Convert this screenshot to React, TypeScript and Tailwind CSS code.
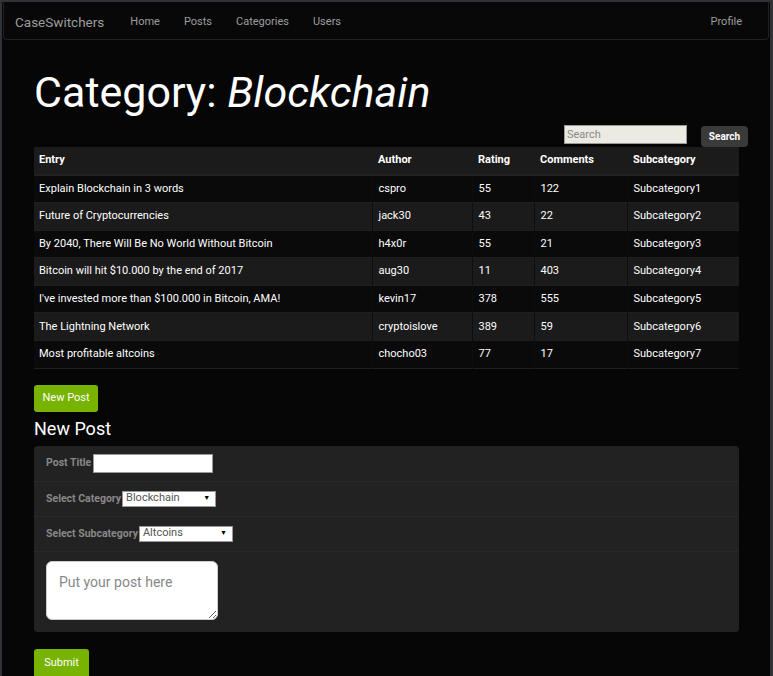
import React from "react";

type Row = {
  entry: string;
  author: string;
  rating: number;
  comments: number;
  sub: string;
};

const rows: Row[] = [
  { entry: "Explain Blockchain in 3 words", author: "cspro", rating: 55, comments: 122, sub: "Subcategory1" },
  { entry: "Future of Cryptocurrencies", author: "jack30", rating: 43, comments: 22, sub: "Subcategory2" },
  { entry: "By 2040, There Will Be No World Without Bitcoin", author: "h4x0r", rating: 55, comments: 21, sub: "Subcategory3" },
  { entry: "Bitcoin will hit $10.000 by the end of 2017", author: "aug30", rating: 11, comments: 403, sub: "Subcategory4" },
  { entry: "I've invested more than $100.000 in Bitcoin, AMA!", author: "kevin17", rating: 378, comments: 555, sub: "Subcategory5" },
  { entry: "The Lightning Network", author: "cryptoislove", rating: 389, comments: 59, sub: "Subcategory6" },
  { entry: "Most profitable altcoins", author: "chocho03", rating: 77, comments: 17, sub: "Subcategory7" },
];

function Navbar() {
  return (
    <nav className="mx-px flex h-[38px] items-center rounded-b border border-t-0 border-[#222] bg-[#080808] pt-[3px] text-[11px] text-[#9d9d9d]">
      <span className="ml-[11px] text-[13.5px]">CaseSwitchers</span>
      <a className="ml-[26px]">Home</a>
      <a className="ml-[24px]">Posts</a>
      <a className="ml-[24px]">Categories</a>
      <a className="ml-[24px]">Users</a>
      <a className="ml-auto mr-[26px]">Profile</a>
    </nav>
  );
}

function PostsTable() {
  return (
    <table className="w-[705px] table-fixed border-collapse text-[11px] text-white">
      <colgroup>
        <col className="w-[338px]" />
        <col className="w-[100px]" />
        <col className="w-[62px]" />
        <col className="w-[93px]" />
        <col className="w-[112px]" />
      </colgroup>
      <thead>
        <tr className="h-[28px] border-b-2 border-[#222] bg-[#1b1b1b] text-left font-bold">
          <th className="pl-[5px]">Entry</th>
          <th className="pl-[6px]">Author</th>
          <th className="pl-[6px]">Rating</th>
          <th className="pl-[6px]">Comments</th>
          <th className="pl-[6px]">Subcategory</th>
        </tr>
      </thead>
      <tbody>
        {rows.map((r, i) => (
          <tr
            key={r.entry}
            className={
              i % 2 === 0
                ? "h-[27.6px] border-b border-[#1f1f1f] bg-[#0a0a0a]"
                : "h-[27.6px] border-b border-[#1f1f1f] bg-[#1b1b1b]"
            }
          >
            <td className="border-r border-[#0e0e0e] pl-[5px]">{r.entry}</td>
            <td className="border-r border-[#0e0e0e] pl-[6px]">{r.author}</td>
            <td className="border-r border-[#0e0e0e] pl-[6px]">{r.rating}</td>
            <td className="border-r border-[#0e0e0e] pl-[6px]">{r.comments}</td>
            <td className="pl-[6px]">{r.sub}</td>
          </tr>
        ))}
      </tbody>
    </table>
  );
}

function FakeSelect({ value }: { value: string }) {
  return (
    <div className="relative ml-px flex h-[16px] w-[94px] items-center border border-[#999] bg-white pl-[3px] text-[11px] font-normal text-[#555]">
      <span>{value}</span>
      <span className="absolute right-[5px] top-[1px] text-[7px] text-black">▼</span>
    </div>
  );
}

function NewPostForm() {
  return (
    <div className="w-[705px] rounded bg-[#222] text-[10.5px] font-bold text-[#888]">
      <div className="flex h-[36px] items-center border-b border-[#282828] pl-[12px]">
        <span>Post Title</span>
        <input className="ml-[2px] h-[19px] w-[120px] border border-[#999] bg-white" />
      </div>
      <div className="flex h-[35px] items-center border-b border-[#282828] pl-[12px]">
        <span>Select Category</span>
        <FakeSelect value="Blockchain" />
      </div>
      <div className="flex h-[35px] items-center border-b border-[#282828] pl-[12px]">
        <span>Select Subcategory</span>
        <FakeSelect value="Altcoins" />
      </div>
      <div className="h-[80px] pl-[12px] pt-[9px]">
        <textarea
          placeholder="Put your post here"
          className="h-[59px] w-[172px] rounded-md border border-[#ccc] bg-white px-[12px] py-[10px] text-[14px] font-normal text-[#555] placeholder:text-[#888]"
        />
      </div>
    </div>
  );
}

export default function App() {
  return (
    <div
      className="min-h-[676px] overflow-hidden border-l-2 border-r-[3px] border-t-2 border-[#2f3236] bg-[#060606] pb-[10px]"
      style={{ fontFamily: "Roboto, 'Liberation Sans', sans-serif" }}
    >
      <Navbar />
      <div className="pl-[32px]">
        <h1 className="mt-[27px] text-[43px] leading-[50px] text-white">
          Category: <em>Blockchain</em>
        </h1>
        <div className="mt-[8px] flex w-[714px] items-start justify-end">
          <input
            placeholder="Search"
            className="h-[19px] w-[123px] border border-[#999] bg-[#ebebe4] px-[2px] text-[11px] text-[#555] placeholder:text-[#888]"
          />
          <button className="ml-[14px] mt-px h-[21px] w-[47px] rounded bg-[#3a3a3a] text-[10px] font-bold text-white">
            Search
          </button>
        </div>
        <PostsTable />
        <button className="mt-[16px] h-[27px] w-[64px] rounded-[3px] bg-[#77b300] text-[11px] text-white">
          New Post
        </button>
        <h2 className="mt-[4px] text-[18px] leading-[26px] text-white">New Post</h2>
        <div className="mt-[4px]">
          <NewPostForm />
        </div>
        <button className="mt-[17px] h-[30px] w-[55px] rounded-[3px] bg-[#77b300] text-[11px] text-white">
          Submit
        </button>
      </div>
    </div>
  );
}
